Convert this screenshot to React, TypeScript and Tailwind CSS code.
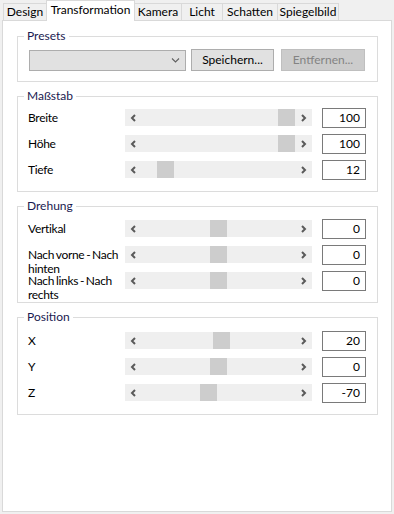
import type { ReactNode } from "react"

type Row = { label: string[]; value: string; thumb: number }

const scaleRows: Row[] = [
  { label: ["Breite"], value: "100", thumb: 153 },
  { label: ["Höhe"], value: "100", thumb: 153 },
  { label: ["Tiefe"], value: "12", thumb: 32 },
]

const rotationRows: Row[] = [
  { label: ["Vertikal"], value: "0", thumb: 85 },
  { label: ["Nach vorne - Nach", "hinten"], value: "0", thumb: 85 },
  { label: ["Nach links - Nach", "rechts"], value: "0", thumb: 85 },
]

const positionRows: Row[] = [
  { label: ["X"], value: "20", thumb: 88 },
  { label: ["Y"], value: "0", thumb: 85 },
  { label: ["Z"], value: "-70", thumb: 75 },
]

const tabs = [
  { name: "Design", w: "w-[44px]" },
  { name: "Transformation", w: "w-[89px]", active: true },
  { name: "Kamera", w: "w-[48px]" },
  { name: "Licht", w: "w-[42px]" },
  { name: "Schatten", w: "w-[56px]" },
  { name: "Spiegelbild", w: "w-[62px]" },
]

function Arrow({ dir }: { dir: "left" | "right" }) {
  return (
    <svg width="7" height="8" viewBox="0 0 7 8" className="text-[#5a5a5a]">
      <polyline
        points={dir === "left" ? "5,1 2,4 5,7" : "2,1 5,4 2,7"}
        fill="none"
        stroke="currentColor"
        strokeWidth="2"
      />
    </svg>
  )
}

function GroupBox({ title, children, className }: { title: string; children: ReactNode; className: string }) {
  return (
    <div className={`relative border border-[#dcdcdc] ${className}`}>
      <span className="absolute -top-[9px] left-[6px] bg-white px-[3px] leading-[16px] text-[#1a1a50]">{title}</span>
      {children}
    </div>
  )
}

function SliderRow({ row }: { row: Row }) {
  return (
    <div className="flex h-[20px] items-start">
      <div className="w-[97px] shrink-0 pt-[3px] leading-[14px] tracking-[-0.3px] whitespace-nowrap text-black [word-spacing:-1px]">
        {row.label.map((l) => (
          <div key={l}>{l}</div>
        ))}
      </div>
      <div className="relative mt-px flex h-[17px] w-[187px] shrink-0 items-center justify-between bg-[#efefef]">
        <div className="flex h-[17px] w-[17px] items-center justify-center">
          <Arrow dir="left" />
        </div>
        <div className="absolute top-0 h-[17px] w-[17px] bg-[#cdcdcd]" style={{ left: row.thumb }} />
        <div className="flex h-[17px] w-[17px] items-center justify-center">
          <Arrow dir="right" />
        </div>
      </div>
      <div className="ml-[10px] flex h-[20px] w-[44px] shrink-0 items-center justify-end border border-[#7a7a7a] bg-white pr-[5px] leading-none text-black">
        {row.value}
      </div>
    </div>
  )
}

function SliderGroup({ title, rows, className }: { title: string; rows: Row[]; className: string }) {
  return (
    <GroupBox title={title} className={className}>
      <div className="flex flex-col gap-[6px] pr-[11px] pb-[11px] pl-[10px]">
        {rows.map((r) => (
          <SliderRow key={r.label.join(" ")} row={r} />
        ))}
      </div>
    </GroupBox>
  )
}

export default function App() {
  return (
    <div className="h-[514px] w-[394px] bg-[#f0f0f0] font-['Lato','Segoe_UI',sans-serif] text-[12px]">
      {/* tab strip */}
      <div className="flex h-[20px] items-end pl-[3px]">
        {tabs.map((t, i) =>
          t.active ? (
            <div
              key={t.name}
              className={`relative z-10 -mb-px flex h-[21px] ${t.w} ${i > 0 ? "-ml-px" : ""} items-center justify-center border border-b-0 border-[#d9d9d9] bg-white pb-[2px] text-black`}
            >
              {t.name}
            </div>
          ) : (
            <div
              key={t.name}
              className={`flex h-[17px] ${t.w} ${i > 0 ? "-ml-px" : ""} items-center justify-center border border-b-0 border-[#d9d9d9] bg-[#f0f0f0] text-black`}
            >
              {t.name}
            </div>
          )
        )}
      </div>

      {/* tab page */}
      <div className="ml-[2px] h-[492px] w-[390px] border border-[#d9d9d9] bg-white pt-[15px] pr-[13px] pl-[14px]">
        <div className="flex flex-col gap-[14px]">
          <GroupBox title="Presets" className="h-[46px]">
            <div className="flex items-start pt-[12px] pl-[11px]">
              <div className="mt-px flex h-[21px] w-[157px] items-center justify-end border border-[#adadad] bg-[#e1e1e1] pr-[5px]">
                <svg width="9" height="5" viewBox="0 0 9 5" className="text-[#606060]">
                  <polyline points="1,0.5 4.5,4 8,0.5" fill="none" stroke="currentColor" strokeWidth="1.1" />
                </svg>
              </div>
              <div className="ml-[5px] flex h-[22px] w-[83px] items-center justify-center border border-[#adadad] bg-[#e1e1e1] text-black">
                Speichern...
              </div>
              <div className="ml-[7px] flex h-[22px] w-[84px] items-center justify-center border border-[#bfbfbf] bg-[#cccccc] text-[#838383]">
                Entfernen...
              </div>
            </div>
          </GroupBox>

          <SliderGroup title="Maßstab" rows={scaleRows} className="pt-[11px]" />
          <SliderGroup title="Drehung" rows={rotationRows} className="pt-[12px]" />
          <SliderGroup title="Position" rows={positionRows} className="pt-[13px]" />
        </div>
      </div>
    </div>
  )
}
